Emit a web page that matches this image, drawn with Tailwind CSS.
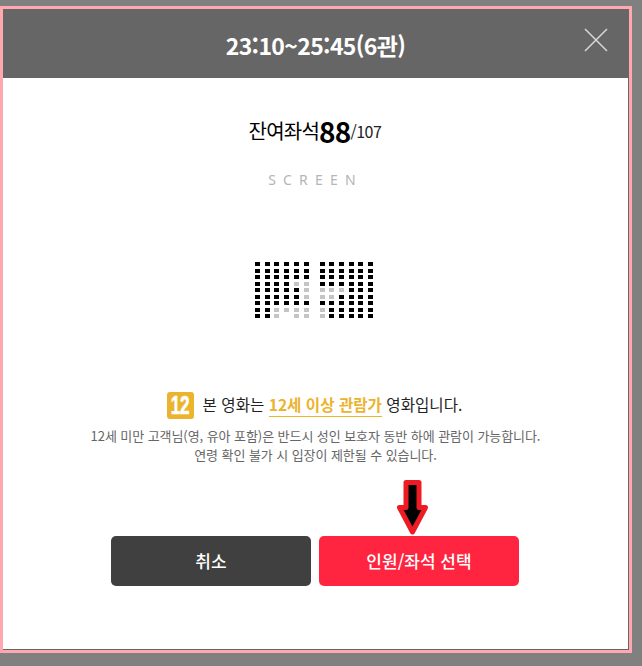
<!DOCTYPE html>
<html lang="ko">
<head>
    <meta charset="UTF-8">
    <meta name="viewport" content="width=device-width, initial-scale=1.0">
    <title>Seat Selection</title>
    <script src="https://cdn.jsdelivr.net/npm/@tailwindcss/browser@4"></script>
</head>
<body class="bg-[#808080] min-h-screen pt-[6px] font-['Noto_Sans_CJK_KR','Noto_Sans',sans-serif]">

    <div class="relative w-[632px] h-[647px] border-[3px] border-[#ffa8b0]">
        <div class="h-full bg-white flex flex-col border-r border-b border-[#666666]">
            <!-- header -->
            <div class="relative h-[69px] shrink-0 bg-[#666666] flex items-center justify-center">
                <h2 class="text-[23px] font-bold text-white tracking-[-0.65px] mt-[4px]">23:10~25:45(6관)</h2>
                <button class="absolute left-[581px] top-[19px] w-[24px] h-[24px]">
                    <svg viewBox="0 0 24 24" class="w-[24px] h-[24px]" fill="none" stroke="#d8d8d8" stroke-width="1.5">
                        <path d="M1 1 L23 23 M23 1 L1 23"/>
                    </svg>
                </button>
            </div>

            <!-- body -->
            <div class="flex flex-col items-center flex-1">
                <p class="mt-[33px] h-[40px] flex items-center justify-center text-[20px] text-black tracking-[-0.8px] ml-[-1px]">
                    잔여좌석<span class="text-[28px] font-bold">88</span><span class="text-[16px] text-[#222222] tracking-[-0.5px]">/107</span>
                </p>
                <p class="mt-[18px] h-[20px] flex items-center text-[14px] text-[#b5b5b5] tracking-[7.2px] font-['Noto_Sans',sans-serif]">SCREEN</p>

                <!-- seat map, filled in below -->
                <div class="mt-[73px] ml-[-3px] h-[62px] flex gap-[11px]">
                    <div id="seatsLeft" class="grid grid-cols-[repeat(6,5px)] gap-x-[4.7px] gap-y-[2.5px] auto-rows-[4px]"></div>
                    <div id="seatsRight" class="grid grid-cols-[repeat(6,5px)] gap-x-[4.7px] gap-y-[2.5px] auto-rows-[4px]"></div>
                </div>

                <div class="mt-[67px] ml-[-2px] flex items-center h-[28px]">
                    <span class="w-[27px] h-[27px] rounded-[3px] bg-[#ecb32f] flex items-center justify-center mr-[9px]">
                        <span class="text-white text-[26px] leading-none font-bold scale-x-[0.66] tracking-[-0.5px] [-webkit-text-stroke:0.6px_white] font-['Liberation_Sans',sans-serif]">12</span>
                    </span>
                    <p class="text-[15.6px] text-[#222222]">본 영화는 <span class="font-bold text-[#ecb32f] border-b border-[#ecb32f] pb-[1px]">12세 이상 관람가</span> 영화입니다.</p>
                </div>
                <p class="mt-[7px] text-[13px] leading-[19px] text-[#666666] text-center tracking-[-0.07px]">
                    12세 미만 고객님(영, 유아 포함)은 반드시 성인 보호자 동반 하에 관람이 가능합니다.<br>
                    연령 확인 불가 시 입장이 제한될 수 있습니다.
                </p>

                <div class="mt-[72px] ml-[-1px] flex gap-[8px]">
                    <button class="w-[200px] h-[50px] rounded-[5px] bg-[#404040] text-white text-[17px] font-medium">취소</button>
                    <button class="w-[200px] h-[50px] rounded-[5px] bg-[#ff243f] text-white text-[17px] font-medium">인원/좌석 선택</button>
                </div>
            </div>
        </div>

        <!-- red annotation arrow drawn over the page -->
        <svg class="absolute left-[394px] top-[471px]" width="34" height="60" viewBox="0 0 34 60">
            <path d="M9 2.5 H22 V27.5 H28.5 L15.5 52 L2.5 27.5 H9 Z" fill="#000000" stroke="#ed1c24" stroke-width="5" stroke-linejoin="round"/>
        </svg>
    </div>

    <script>
        // k = black seat, g = taken, . = empty
        const left = ["kkkkkk", "kkkkkk", "kkkkkk", "kkkkgg", "kkkkkg", "kkkkkg", "kkkkkk", "kkgggg", "kkg.gg"];
        const right = ["kkkkkk", "kkkkkk", "kkkkkk", "kkkkkk", "gggkkk", "ggkkkk", "kkkkkk", "gkkkkk", "gkkkkk"];

        function drawSeats(id, rows) {
            const cls = { k: "bg-black", g: "bg-[#c4c4c4]", ".": "bg-transparent" };
            document.getElementById(id).innerHTML = rows
                .map(row => row.split("").map(c => `<i class="block w-[5px] h-[4px] ${cls[c]}"></i>`).join(""))
                .join("");
        }

        drawSeats("seatsLeft", left);
        drawSeats("seatsRight", right);
    </script>

</body>
</html>
